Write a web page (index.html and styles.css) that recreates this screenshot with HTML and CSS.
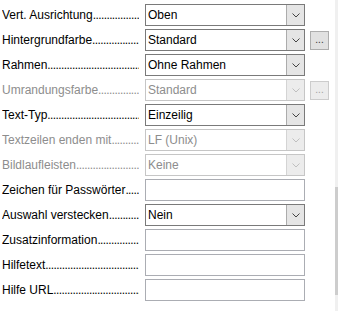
FILE: index.html
```html
<!DOCTYPE html>
<html lang="de">
<head>
  <meta charset="UTF-8" />
  <title>Eigenschaften</title>
  <link rel="stylesheet" href="styles.css">
</head>
<body>
  <div class="page">
    <div class="props">
      <div class="row">
        <div class="label">Vert. Ausrichtung</div>
        <div class="combo"><span class="value">Oben</span><span class="drop"><svg width="8" height="5" viewBox="0 0 8 5"><path d="M0.5 0.5 L4 4 L7.5 0.5" fill="none" stroke="currentColor"/></svg></span></div>
      </div>
      <div class="row">
        <div class="label">Hintergrundfarbe</div>
        <div class="combo"><span class="value">Standard</span><span class="drop"><svg width="8" height="5" viewBox="0 0 8 5"><path d="M0.5 0.5 L4 4 L7.5 0.5" fill="none" stroke="currentColor"/></svg></span></div>
        <button class="more">...</button>
      </div>
      <div class="row">
        <div class="label">Rahmen</div>
        <div class="combo"><span class="value">Ohne Rahmen</span><span class="drop"><svg width="8" height="5" viewBox="0 0 8 5"><path d="M0.5 0.5 L4 4 L7.5 0.5" fill="none" stroke="currentColor"/></svg></span></div>
      </div>
      <div class="row disabled">
        <div class="label">Umrandungsfarbe</div>
        <div class="combo"><span class="value">Standard</span><span class="drop"><svg width="8" height="5" viewBox="0 0 8 5"><path d="M0.5 0.5 L4 4 L7.5 0.5" fill="none" stroke="currentColor"/></svg></span></div>
        <button class="more">...</button>
      </div>
      <div class="row">
        <div class="label">Text-Typ</div>
        <div class="combo"><span class="value">Einzeilig</span><span class="drop"><svg width="8" height="5" viewBox="0 0 8 5"><path d="M0.5 0.5 L4 4 L7.5 0.5" fill="none" stroke="currentColor"/></svg></span></div>
      </div>
      <div class="row disabled">
        <div class="label">Textzeilen enden mit</div>
        <div class="combo"><span class="value">LF (Unix)</span><span class="drop"><svg width="8" height="5" viewBox="0 0 8 5"><path d="M0.5 0.5 L4 4 L7.5 0.5" fill="none" stroke="currentColor"/></svg></span></div>
      </div>
      <div class="row disabled">
        <div class="label">Bildlaufleisten</div>
        <div class="combo"><span class="value">Keine</span><span class="drop"><svg width="8" height="5" viewBox="0 0 8 5"><path d="M0.5 0.5 L4 4 L7.5 0.5" fill="none" stroke="currentColor"/></svg></span></div>
      </div>
      <div class="row">
        <div class="label">Zeichen für Passwörter</div>
        <div class="field"></div>
      </div>
      <div class="row">
        <div class="label">Auswahl verstecken</div>
        <div class="combo"><span class="value">Nein</span><span class="drop"><svg width="8" height="5" viewBox="0 0 8 5"><path d="M0.5 0.5 L4 4 L7.5 0.5" fill="none" stroke="currentColor"/></svg></span></div>
      </div>
      <div class="row">
        <div class="label">Zusatzinformation</div>
        <div class="field"></div>
      </div>
      <div class="row">
        <div class="label">Hilfetext</div>
        <div class="field"></div>
      </div>
      <div class="row">
        <div class="label">Hilfe URL</div>
        <div class="field"></div>
      </div>
    </div>
    <div class="scrollbar">
      <div class="thumb"></div>
    </div>
  </div>
</body>
</html>
```
FILE: styles.css
```css
body {
  margin: 0;
  background: #fff;
  color: #000;
  font-family: 'Liberation Sans', Arial, sans-serif;
  font-size: 12px;
}
.page {
  display: flex;
  height: 311px;
  overflow: hidden;
}
.props {
  flex: 1;
  display: flex;
  flex-direction: column;
  gap: 3px;
  padding-top: 4px;
}
.row {
  display: flex;
  align-items: center;
  height: 22px;
}
.label {
  width: 137px;
  margin-left: 2px;
  margin-right: 6px;
  white-space: nowrap;
  overflow: hidden;
}
.label::after {
  content: "..............................................................";
  letter-spacing: -0.6px;
}
.combo, .field {
  box-sizing: border-box;
  width: 160px;
  height: 22px;
  background: #fff;
}
.combo {
  display: flex;
  border: 1px solid #7a7a7a;
}
.field {
  border: 1px solid #abadb3;
}
.value {
  flex: 1;
  padding-left: 2px;
  line-height: 20px;
}
.drop {
  width: 17px;
  display: flex;
  align-items: center;
  justify-content: center;
  background: #e5e5e5;
  border-left: 1px solid #acacac;
  color: #444;
}
.more {
  box-sizing: border-box;
  width: 19px;
  height: 19px;
  margin-left: 5px;
  padding: 0;
  border: 1px solid #adadad;
  background: #e1e1e1;
  color: #333;
  font-family: inherit;
  font-size: 10px;
  line-height: 12px;
}
.disabled .label {
  color: #8d8d8d;
}
.disabled .combo {
  border-color: #c6c6c6;
  color: #8d8d8d;
}
.disabled .drop {
  background: #ececec;
  border-left-color: #d4d4d4;
  color: #bfbfbf;
}
.disabled .more {
  border-color: #cccccc;
  background: #ececec;
  color: #a0a0a0;
}
.scrollbar {
  width: 3px;
  background: #f0f0f0;
}
.thumb {
  margin-top: 187px;
  height: 108px;
  background: #cdcdcd;
}
```
